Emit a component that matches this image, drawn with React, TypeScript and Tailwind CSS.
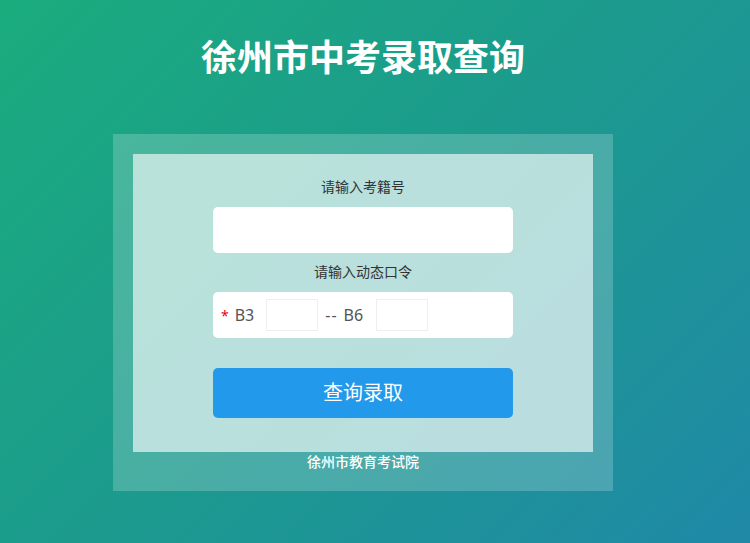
import React from 'react';

const App: React.FC = () => {
  return (
    <div
      className="min-h-[543px] w-full bg-[linear-gradient(135deg,#1aac7d_0%,#1c9a8e_50%,#1f89a7_100%)]"
      style={{ fontFamily: '"Noto Sans", "Noto Sans CJK SC", sans-serif' }}
    >
      <div className="w-[726px] flex flex-col items-center">
        <h1 className="mt-[31px] text-[36px] leading-[54px] font-bold text-white">徐州市中考录取查询</h1>

        <div className="mt-[49px] w-[500px] bg-white/20 px-[20px] pt-[20px] pb-[19px]">
          <div className="h-[298px] bg-white/[0.62] flex flex-col items-center pt-[23px]">
            <p className="text-[14px] leading-[20px] text-[#333]">请输入考籍号</p>
            <input className="mt-[10px] w-[300px] h-[46px] rounded-[5px] bg-white outline-none px-3" />

            <p className="mt-[9px] text-[14px] leading-[20px] text-[#333]">请输入动态口令</p>
            <div className="mt-[10px] w-[300px] h-[46px] rounded-[5px] bg-white flex items-center pl-[8px] text-[16px] text-[#555]">
              <span className="text-red-600 text-[14px] mr-[6px]">*</span>
              <span>B3</span>
              <input className="ml-[12px] w-[52px] h-[32px] border border-[#eee] outline-none" />
              <span className="ml-[7px] tracking-[1px]">--</span>
              <span className="ml-[6px]">B6</span>
              <input className="ml-[13px] w-[52px] h-[32px] border border-[#eee] outline-none" />
            </div>

            <button className="mt-[30px] w-[300px] h-[50px] rounded-[5px] bg-[#2299eb] text-white text-[20px]">
              查询录取
            </button>
          </div>
          <p className="text-center text-white text-[14px] leading-[20px] font-medium">徐州市教育考试院</p>
        </div>
      </div>
    </div>
  );
};

export default App;
